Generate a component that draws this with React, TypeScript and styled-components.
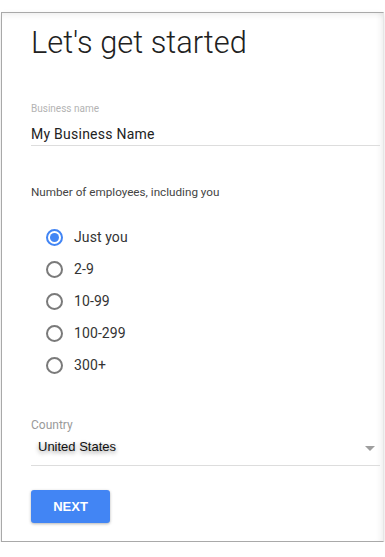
import React, { useState } from 'react';
import styled, { createGlobalStyle } from 'styled-components';

const GlobalStyle = createGlobalStyle`
  html, body {
    margin: 0;
    padding: 0;
    background: #ffffff;
    font-family: Roboto, "Noto Sans", Arial, sans-serif;
  }
`;

const Page = styled.div`
  padding-top: 12px;
  padding-left: 1px;
`;

const Card = styled.div`
  box-sizing: border-box;
  width: 383px;
  height: 530px;
  padding: 0 3px 0 29px;
  background: #ffffff;
  border: 1px solid #a9a9a9;
  border-right-color: #e6e6e6;
  box-shadow:
    0 3px 6px rgba(0, 0, 0, 0.12),
    inset 0 7px 6px -5px rgba(0, 0, 0, 0.07),
    inset -7px 0 6px -5px rgba(0, 0, 0, 0.07);
`;

const Title = styled.h1`
  margin: 12px 0 0;
  font-size: 30.8px;
  line-height: 36px;
  font-weight: 300;
  color: #212121;
`;

const Field = styled.div<{ $gap: number }>`
  margin-top: ${p => p.$gap}px;
`;

const FieldLabel = styled.div<{ $size: number; $color: string }>`
  font-size: ${p => p.$size}px;
  line-height: ${p => p.$size + 2}px;
  color: ${p => p.$color};
`;

const TextInput = styled.input`
  display: block;
  box-sizing: content-box;
  width: 100%;
  margin-top: 9px;
  padding: 0 0 1px;
  border: 0;
  border-bottom: 1px solid #dddddd;
  outline: none;
  font-family: Roboto, Arial, sans-serif;
  font-size: 14px;
  letter-spacing: 0.25px;
  line-height: 20px;
  height: 20px;
  color: #222222;
  background: transparent;
`;

const Question = styled.div`
  margin-top: 40px;
  font-size: 11.7px;
  line-height: 13px;
  color: #444444;
`;

const RadioList = styled.div`
  margin-top: 22px;
  display: flex;
  flex-direction: column;
`;

const RadioRow = styled.label`
  display: flex;
  align-items: center;
  height: 32px;
  padding-left: 15px;
  cursor: pointer;
  font-size: 14px;
  letter-spacing: 0.1px;
  color: #333333;
`;

const RadioCircle = styled.span<{ $checked: boolean }>`
  box-sizing: border-box;
  width: 17px;
  height: 17px;
  margin-right: 11px;
  border-radius: 50%;
  border: 2px solid ${p => (p.$checked ? '#4285f4' : '#7a7a7a')};
  display: flex;
  align-items: center;
  justify-content: center;

  &::after {
    content: '';
    width: 9px;
    height: 9px;
    border-radius: 50%;
    background: #4285f4;
    display: ${p => (p.$checked ? 'block' : 'none')};
  }
`;

const SelectBox = styled.div`
  margin-top: 5px;
  display: flex;
  align-items: center;
  justify-content: space-between;
  padding: 0 5px 8px 7px;
  border-bottom: 1px solid #dddddd;
`;

const SelectValue = styled.span`
  font-family: "Liberation Sans", Arial, sans-serif;
  font-size: 13px;
  line-height: 20px;
  color: #111111;
  text-shadow: 0 2px 4px rgba(0, 0, 0, 0.45);
`;

const Caret = styled.span`
  width: 0;
  height: 0;
  border-left: 5px solid transparent;
  border-right: 5px solid transparent;
  border-top: 5px solid #9e9e9e;
  margin-top: 2px;
`;

const NextButton = styled.button`
  display: block;
  margin-top: 24px;
  width: 79px;
  height: 33px;
  border: 0;
  border-radius: 3px;
  background: #4285f4;
  color: #ffffff;
  font-family: "Liberation Sans", Arial, sans-serif;
  font-weight: 700;
  font-size: 13px;
  box-shadow: 0 1px 3px rgba(0, 0, 0, 0.3);
  cursor: pointer;
`;

const sizes = ['Just you', '2-9', '10-99', '100-299', '300+'];

export default function App() {
  const [size, setSize] = useState('Just you');

  return (
    <Page>
      <GlobalStyle />
      <Card>
        <Title>Let's get started</Title>

        <Field $gap={42}>
          <FieldLabel $size={10} $color="#b3b3b3">Business name</FieldLabel>
          <TextInput defaultValue="My Business Name" />
        </Field>

        <Question>Number of employees, including you</Question>
        <RadioList>
          {sizes.map(s => (
            <RadioRow key={s} onClick={() => setSize(s)}>
              <RadioCircle $checked={size === s} />
              {s}
            </RadioRow>
          ))}
        </RadioList>

        <Field $gap={37}>
          <FieldLabel $size={12} $color="#9a9a9a">Country</FieldLabel>
          <SelectBox>
            <SelectValue>United States</SelectValue>
            <Caret />
          </SelectBox>
        </Field>

        <NextButton>NEXT</NextButton>
      </Card>
    </Page>
  );
}
